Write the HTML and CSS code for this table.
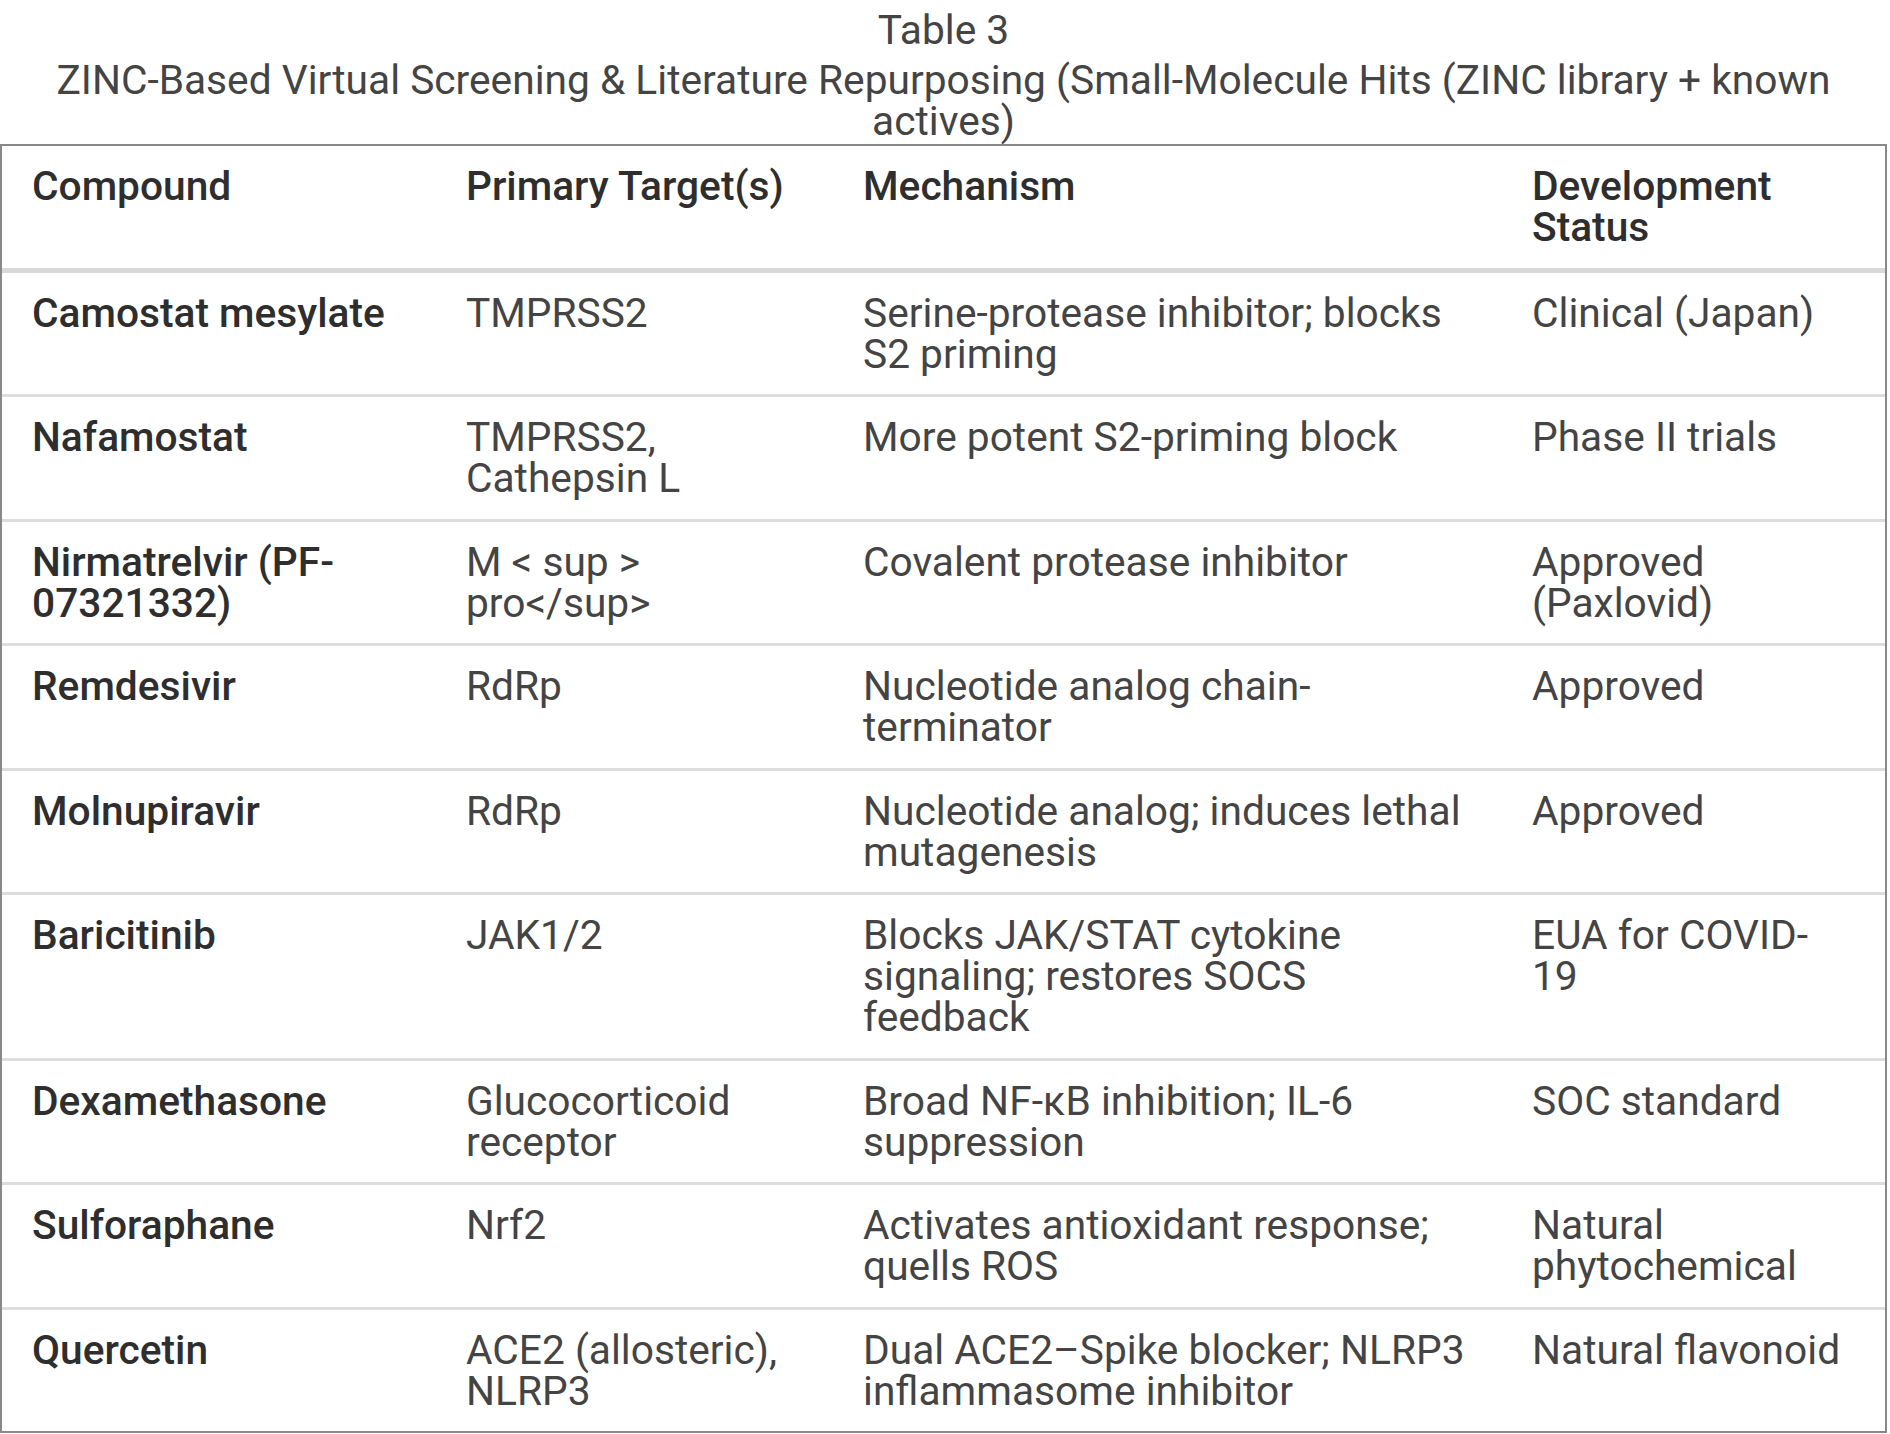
FILE: index.html
```html
<!DOCTYPE html>
<html lang="en">
<head>
<meta charset="utf-8">
<title>Table 3</title>
<link rel="stylesheet" href="styles.css">
</head>
<body>
<table class="data-table">
  <caption class="table-caption">
    <div class="caption-label">Table 3</div>
    <div class="caption-text">ZINC-Based Virtual Screening &amp; Literature Repurposing (Small-Molecule Hits (ZINC library + known actives)</div>
  </caption>
  <colgroup>
    <col class="col-compound">
    <col class="col-target">
    <col class="col-mechanism">
    <col class="col-status">
  </colgroup>
  <thead>
    <tr>
      <th>Compound</th>
      <th>Primary Target(s)</th>
      <th>Mechanism</th>
      <th>Development Status</th>
    </tr>
  </thead>
  <tbody>
    <tr>
      <td class="name">Camostat mesylate</td>
      <td>TMPRSS2</td>
      <td>Serine-protease inhibitor; blocks S2 priming</td>
      <td>Clinical (Japan)</td>
    </tr>
    <tr>
      <td class="name">Nafamostat</td>
      <td>TMPRSS2, Cathepsin L</td>
      <td>More potent S2-priming block</td>
      <td>Phase II trials</td>
    </tr>
    <tr>
      <td class="name">Nirmatrelvir (PF-07321332)</td>
      <td>M &lt; sup &gt; pro&lt;/sup&gt;</td>
      <td>Covalent protease inhibitor</td>
      <td>Approved (Paxlovid)</td>
    </tr>
    <tr>
      <td class="name">Remdesivir</td>
      <td>RdRp</td>
      <td>Nucleotide analog chain-terminator</td>
      <td>Approved</td>
    </tr>
    <tr>
      <td class="name">Molnupiravir</td>
      <td>RdRp</td>
      <td>Nucleotide analog; induces lethal mutagenesis</td>
      <td>Approved</td>
    </tr>
    <tr>
      <td class="name">Baricitinib</td>
      <td>JAK1/2</td>
      <td>Blocks JAK/STAT cytokine signaling; restores SOCS feedback</td>
      <td>EUA for COVID-19</td>
    </tr>
    <tr>
      <td class="name">Dexamethasone</td>
      <td>Glucocorticoid receptor</td>
      <td>Broad NF-κB inhibition; IL-6 suppression</td>
      <td>SOC standard</td>
    </tr>
    <tr>
      <td class="name">Sulforaphane</td>
      <td>Nrf2</td>
      <td>Activates antioxidant response; quells ROS</td>
      <td>Natural phytochemical</td>
    </tr>
    <tr>
      <td class="name">Quercetin</td>
      <td>ACE2 (allosteric), NLRP3</td>
      <td>Dual ACE2–Spike blocker; NLRP3 inflammasome inhibitor</td>
      <td>Natural flavonoid</td>
    </tr>
  </tbody>
</table>
</body>
</html>
```

FILE: styles.css
```css
html, body {
  margin: 0;
  padding: 0;
  background: #ffffff;
}

body {
  font-family: Roboto, "Liberation Sans", Arial, sans-serif;
  font-size: 40.7px;
  line-height: 41px;
  color: #444444;
}

.data-table {
  width: 1887px;
  table-layout: fixed;
  border-collapse: separate;
  border-spacing: 0;
  border: 2px solid #888888;
}

.table-caption {
  caption-side: top;
  text-align: center;
  color: #444444;
  padding: 10px 0 2px;
}

.caption-label {
  margin-bottom: 9px;
}

.col-compound { width: 434px; }
.col-target { width: 397px; }
.col-mechanism { width: 669px; }
.col-status { width: 383px; }

.data-table th,
.data-table td {
  text-align: left;
  vertical-align: top;
  padding: 20px 35px 19.5px 30px;
  border-bottom: 3px solid #dddddd;
}

.data-table th {
  font-weight: 500;
  color: #2e2e2e;
  border-bottom: 5px solid #d9d9d9;
}

.data-table td.name {
  font-weight: 500;
  color: #2e2e2e;
}

.data-table tbody tr:last-child td {
  border-bottom: none;
}
```
